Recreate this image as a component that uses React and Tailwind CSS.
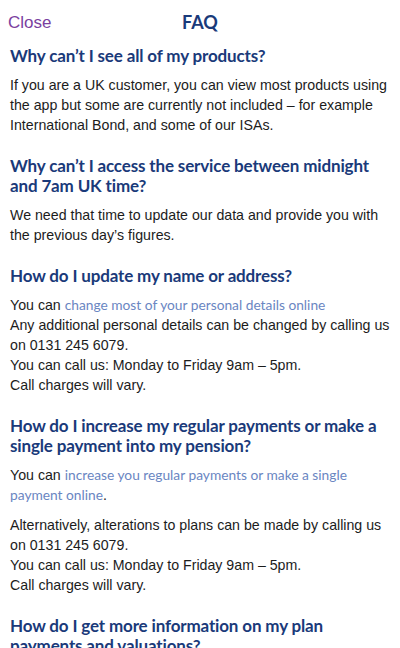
const faqs = [
  {
    q: "Why can’t I see all of my products?",
    body: [
      [
        "If you are a UK customer, you can view most products using the app but some are currently not included – for example International Bond, and some of our ISAs.",
      ],
    ],
  },
  {
    q: "Why can’t I access the service between midnight and 7am UK time?",
    body: [["We need that time to update our data and provide you with the previous day’s figures."]],
  },
  {
    q: "How do I update my name or address?",
    body: [
      [
        "You can ",
        { link: "change most of your personal details online" },
        { br: true },
        "Any additional personal details can be changed by calling us on 0131 245 6079.",
        { br: true },
        "You can call us: Monday to Friday 9am – 5pm.",
        { br: true },
        "Call charges will vary.",
      ],
    ],
  },
  {
    q: "How do I increase my regular payments or make a single payment into my pension?",
    body: [
      ["You can ", { link: "increase you regular payments or make a single payment online" }, "."],
      [
        "Alternatively, alterations to plans can be made by calling us on 0131 245 6079.",
        { br: true },
        "You can call us: Monday to Friday 9am – 5pm.",
        { br: true },
        "Call charges will vary.",
      ],
    ],
  },
  {
    q: "How do I get more information on my plan payments and valuations?",
    body: [["Please call us on 0131 245 6079."]],
  },
];

const Para = ({ parts }) => (
  <p className="text-[14.2px] leading-[20px] text-[#1c1c1c]">
    {parts.map((p, i) => {
      if (typeof p === "string") return <span key={i}>{p}</span>;
      if (p.br) return <br key={i} />;
      return (
        <a key={i} className="font-['Lato',sans-serif] text-[13.75px] text-[#6a86c2]">
          {p.link}
        </a>
      );
    })}
  </p>
);

const App = () => {
  return (
    <div className="w-[400px] h-[648px] overflow-hidden bg-white font-['Liberation_Sans',Arial,sans-serif]">
      <div className="grid grid-cols-[1fr_auto_1fr] items-center h-[45px] px-[8px]">
        <button type="button" className="justify-self-start text-[17px] text-[#7b3f9f]">
          Close
        </button>
        <h1 className="font-['Lato',sans-serif] font-bold text-[18px] text-[#1a3a7a]">FAQ</h1>
        <span />
      </div>
      <div className="px-[10px] pt-[1px] flex flex-col gap-[21px]">
        {faqs.map((f) => (
          <section key={f.q} className="flex flex-col gap-[9px]">
            <h2 className="font-['Lato',sans-serif] font-bold text-[17px] tracking-[-0.15px] leading-[20px] text-[#1a3a7a]">
              {f.q}
            </h2>
            <div className="flex flex-col gap-[10px]">
              {f.body.map((parts, i) => (
                <Para key={i} parts={parts} />
              ))}
            </div>
          </section>
        ))}
      </div>
    </div>
  );
};

export default App;
